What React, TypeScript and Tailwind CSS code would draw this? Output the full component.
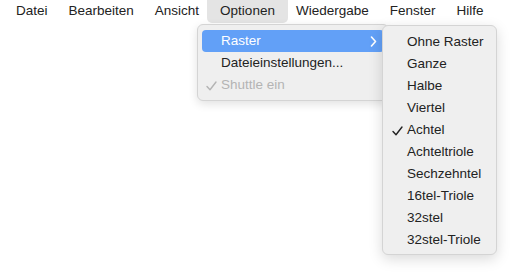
import React from "react";

const font = { fontFamily: '"Liberation Sans", Arial, sans-serif' };

function Check({ color }: { color: string }) {
  return (
    <svg width="11" height="10" viewBox="0 0 11 10" className="absolute left-[-15px] top-[6px]">
      <path d="M1 5.5 L4 8.8 L10 1" fill="none" stroke={color} strokeWidth="1.4" strokeLinecap="round" strokeLinejoin="round" />
    </svg>
  );
}

export default function App() {
  const bar = ["Datei", "Bearbeiten", "Ansicht", "Optionen", "Wiedergabe", "Fenster", "Hilfe"];
  const sub = [
    "Ohne Raster",
    "Ganze",
    "Halbe",
    "Viertel",
    "Achtel",
    "Achteltriole",
    "Sechzehntel",
    "16tel-Triole",
    "32stel",
    "32stel-Triole",
  ];
  return (
    <div className="relative w-[529px] h-[280px] bg-white text-[13.5px] text-[#222222]" style={font}>
      <div className="flex h-[23px] items-center pl-[5.5px]">
        {bar.map((b) =>
          b === "Optionen" ? (
            <div key={b} className="h-[23px] flex items-center px-[13.5px] -mx-[3px] bg-[#e4e4e4] rounded-b-[5px]">
              {b}
            </div>
          ) : (
            <div key={b} className="h-[23px] flex items-center px-[10.5px]">
              {b}
            </div>
          )
        )}
      </div>

      <div className="absolute left-[197px] top-[24px] w-[192px] h-[77px] rounded-[6px] bg-[#efefef] border border-[#d4d4d4] shadow-[0_3px_10px_rgba(0,0,0,0.12)] pt-[5px] px-[4px]">
        <div className="relative h-[22px] flex items-center rounded-[4px] bg-[#62a0f7] text-white pl-[19px] pt-[1px]">
          Raster
          <svg width="7" height="11" viewBox="0 0 7 11" className="absolute left-[168px] top-[6px]">
            <path d="M1.5 1 L5.5 5.5 L1.5 10" fill="none" stroke="white" strokeWidth="1.6" strokeLinecap="round" strokeLinejoin="round" />
          </svg>
        </div>
        <div className="h-[22px] flex items-center pl-[19px] pt-[1px]">Dateieinstellungen...</div>
        <div className="relative h-[22px] flex items-center pl-[19px] pt-[1px] text-[#b4b4b4]">
          <span className="relative">
            <Check color="#b4b4b4" />
            Shuttle ein
          </span>
        </div>
      </div>

      <div className="absolute left-[382px] top-[25px] w-[115px] h-[230px] rounded-[6px] bg-[#efefef] border border-[#d4d4d4] shadow-[0_4px_14px_rgba(0,0,0,0.15)] pt-[5px] pl-[24px]">
        {sub.map((s) => (
          <div key={s} className="h-[22px] flex items-center">
            <span className="relative">
              {s === "Achtel" && <Check color="#222222" />}
              {s}
            </span>
          </div>
        ))}
      </div>
    </div>
  );
}
